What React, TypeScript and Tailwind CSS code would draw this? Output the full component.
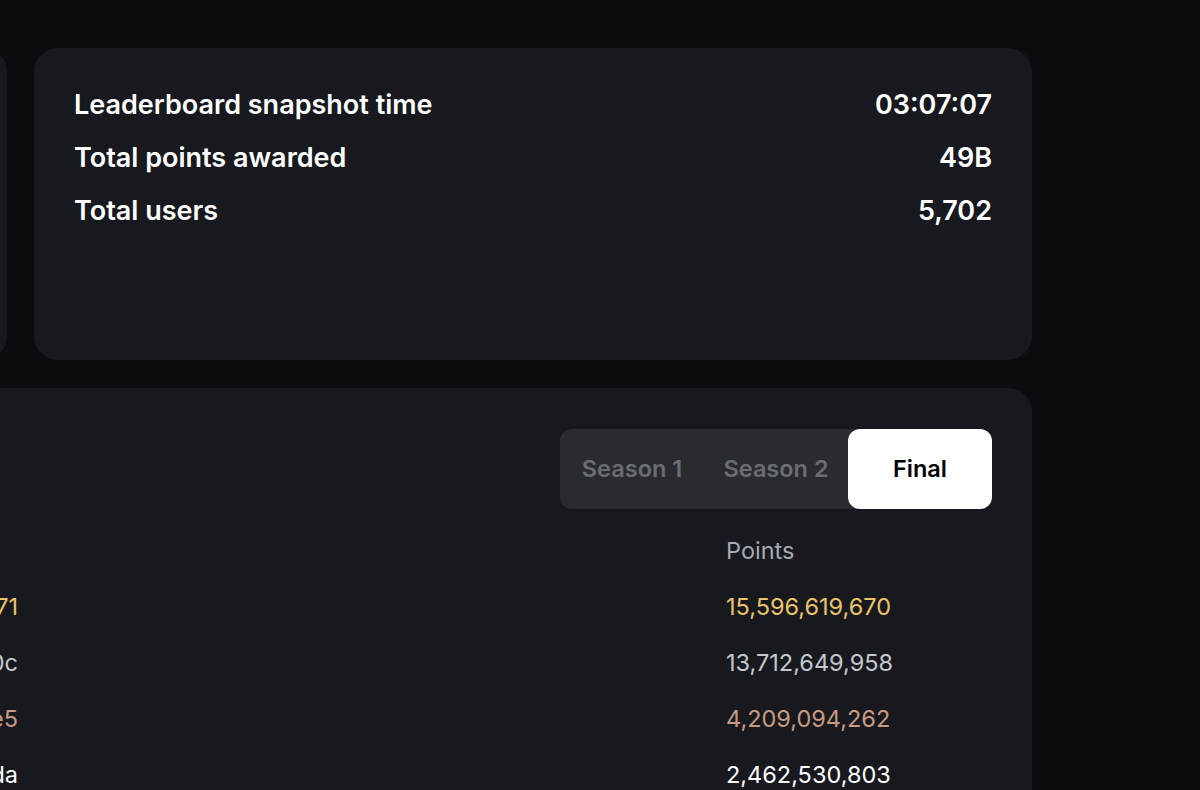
import React from 'react';

const stats = [
  { label: 'Leaderboard snapshot time', value: '03:07:07' },
  { label: 'Total points awarded', value: '49B' },
  { label: 'Total users', value: '5,702' },
];

const rows = [
  { user: '0x8a3f…be71', points: '15,596,619,670', color: 'text-[#e9c46a]' },
  { user: '0x51d2…7a0c', points: '13,712,649,958', color: 'text-[#c5c7cf]' },
  { user: '0x9c07…41e5', points: '4,209,094,262', color: 'text-[#c99a82]' },
  { user: '0x2be8…f3da', points: '2,462,530,803', color: 'text-white' },
];

const tabs = ['Season 1', 'Season 2', 'Final'];

export default function App() {
  return (
    <div
      className="min-h-screen h-[790px] overflow-hidden bg-[#0b0c10] text-white"
      style={{ fontFamily: 'Inter, "Noto Sans", sans-serif' }}
    >
      <div className="-ml-[400px] w-[1432px] pt-12 flex flex-col gap-7">
        {/* top row */}
        <div className="flex gap-[27px]">
          <div className="w-[407px] h-[312px] rounded-3xl bg-[#18191f]" />
          <div className="flex-1 h-[312px] rounded-3xl bg-[#18191f] px-10 pt-[41px]">
            <div className="flex flex-col gap-[21px]">
              {stats.map((s) => (
                <div key={s.label} className="flex justify-between text-[27px] leading-8 font-semibold">
                  <span>{s.label}</span>
                  <span>{s.value}</span>
                </div>
              ))}
            </div>
          </div>
        </div>

        {/* leaderboard */}
        <div className="rounded-3xl bg-[#18191f] p-10 pt-[41px] h-[500px]">
          <div className="flex justify-end">
            <div className="flex rounded-xl bg-[#2a2b30]">
              {tabs.map((t) => (
                <button
                  key={t}
                  className={
                    t === 'Final'
                      ? 'w-[144px] h-20 rounded-xl bg-white text-black text-[23.5px] font-semibold'
                      : 'w-[144px] h-20 rounded-xl text-[#6c6d73] text-[23.5px] font-semibold'
                  }
                >
                  {t}
                </button>
              ))}
            </div>
          </div>

          <div className="mt-[26px] flex flex-col gap-6 text-[23.5px] leading-8">
            <div className="flex">
              <span className="w-[378px]"></span>
              <span className="ml-[708px] text-[#a8aab2]">Points</span>
            </div>
            {rows.map((r) => (
              <div key={r.points} className="flex">
                <span className={`w-[378px] text-right ${r.color}`}>{r.user}</span>
                <span className={`ml-[708px] ${r.color}`}>{r.points}</span>
              </div>
            ))}
          </div>
        </div>
      </div>
    </div>
  );
}
